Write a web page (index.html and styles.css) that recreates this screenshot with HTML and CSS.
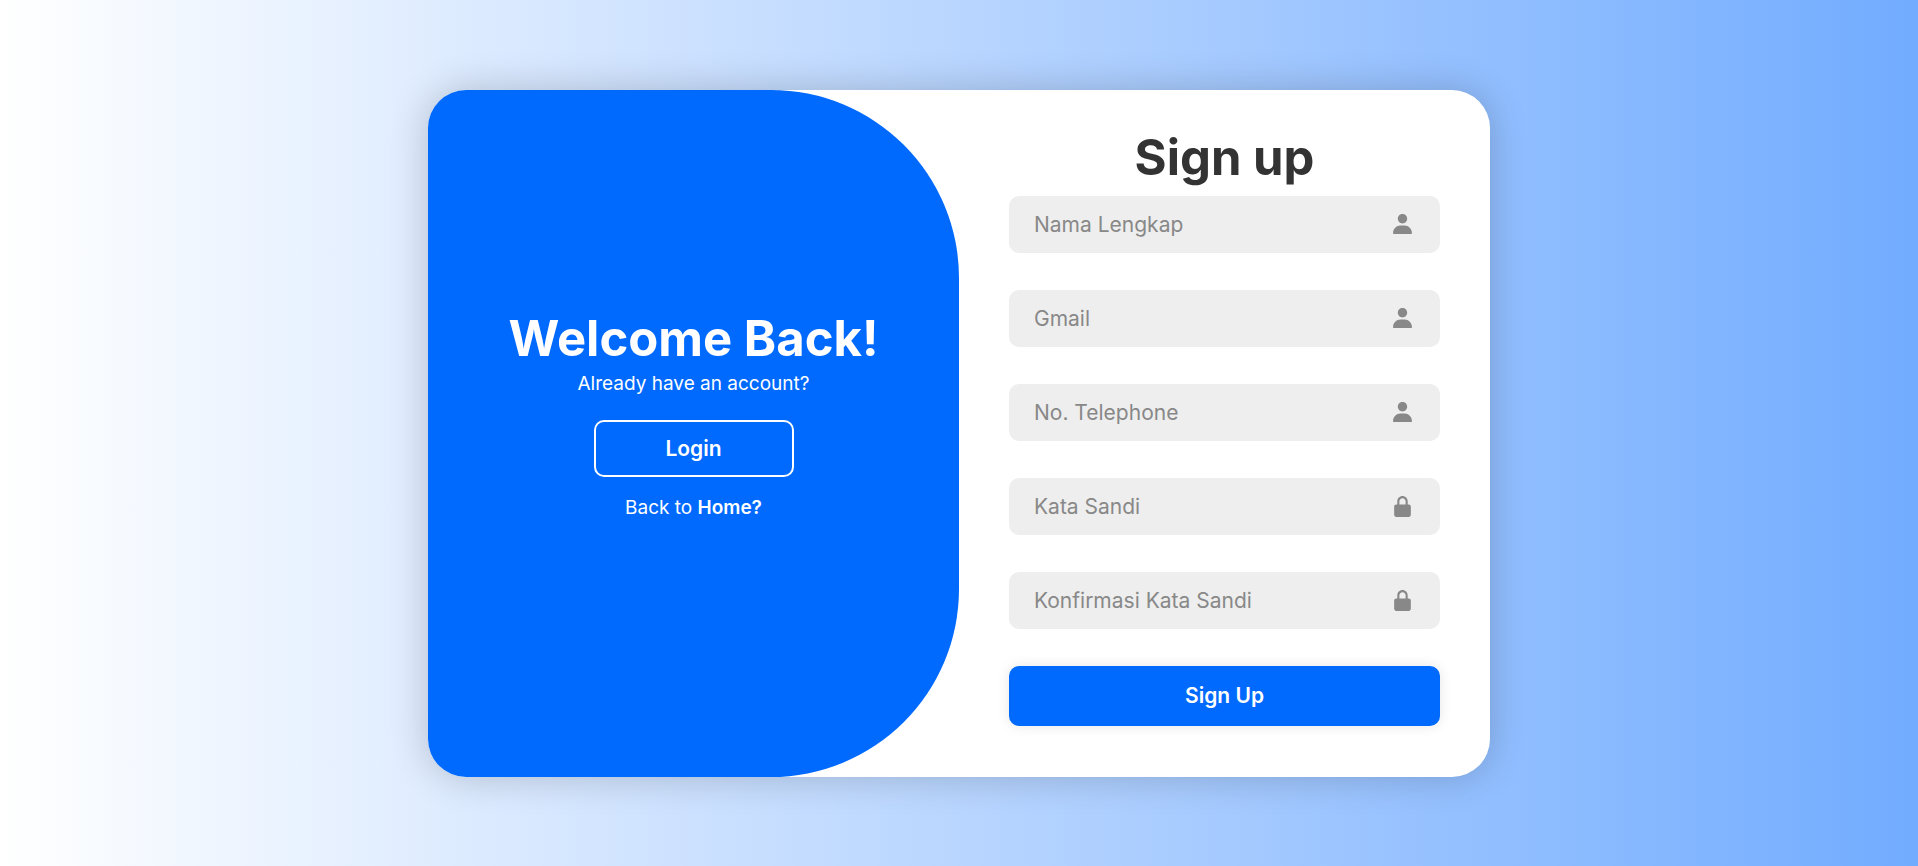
FILE: index.html
```html
<!DOCTYPE html>
<html lang="id">
<head>
<meta charset="utf-8">
<meta name="viewport" content="width=device-width, initial-scale=1">
<title>Sign up</title>
<link rel="stylesheet" href="styles.css">
</head>
<body>
<svg class="sprite" aria-hidden="true">
  <symbol id="icon-user" viewBox="0 0 24 24"><path d="M7.500 6.500C7.500 8.981 9.519 11 12 11s4.500-2.019 4.500-4.500S14.481 2 12 2 7.500 4.019 7.500 6.500zM20 21h1v-1c0-3.859-3.141-7-7-7h-4c-3.860 0-7 3.141-7 7v1h17z"/></symbol>
  <symbol id="icon-lock" viewBox="0 0 24 24"><path d="M20 12c0-1.103-.897-2-2-2h-1V7c0-2.757-2.243-5-5-5S7 4.243 7 7v3H6c-1.103 0-2 .897-2 2v8c0 1.103.897 2 2 2h12c1.103 0 2-.897 2-2v-8zM9 7c0-1.654 1.346-3 3-3s3 1.346 3 3v3H9V7z"/></symbol>
</svg>
<main class="card">
  <section class="welcome">
    <h1 class="title title-light">Welcome Back!</h1>
    <p class="note">Already have an account?</p>
    <button class="login" type="button">Login</button>
    <p class="note">Back to <a class="home" href="#">Home?</a></p>
  </section>
  <form class="signup">
    <h1 class="title title-dark">Sign up</h1>
    <div class="fields">
      <label class="field"><input class="input" type="text" placeholder="Nama Lengkap" aria-label="Nama Lengkap"><svg class="icon" aria-hidden="true"><use href="#icon-user"/></svg></label>
      <label class="field"><input class="input" type="email" placeholder="Gmail" aria-label="Gmail"><svg class="icon" aria-hidden="true"><use href="#icon-user"/></svg></label>
      <label class="field"><input class="input" type="tel" placeholder="No. Telephone" aria-label="No. Telephone"><svg class="icon" aria-hidden="true"><use href="#icon-user"/></svg></label>
      <label class="field"><input class="input" type="password" placeholder="Kata Sandi" aria-label="Kata Sandi"><svg class="icon" aria-hidden="true"><use href="#icon-lock"/></svg></label>
      <label class="field"><input class="input" type="password" placeholder="Konfirmasi Kata Sandi" aria-label="Konfirmasi Kata Sandi"><svg class="icon" aria-hidden="true"><use href="#icon-lock"/></svg></label>
      <button class="submit" type="submit">Sign Up</button>
    </div>
  </form>
</main>
</body>
</html>
```
FILE: styles.css
```css
* {
  box-sizing: border-box;
  margin: 0;
  padding: 0;
}

body {
  display: flex;
  align-items: center;
  justify-content: center;
  min-height: 100vh;
  padding: 24px;
  background: linear-gradient(90deg, #ffffff, #72acff);
  font-family: Inter, "Open Sans", sans-serif;
  color: #333333;
}

.sprite {
  display: none;
}

.card {
  display: grid;
  grid-template-columns: 1fr 1fr;
  width: 100%;
  max-width: 1062px;
  overflow: hidden;
  border-radius: 38px;
  background: #ffffff;
  box-shadow: 0 0 38px rgba(0, 0, 0, 0.2);
}

.welcome {
  display: flex;
  flex-direction: column;
  align-items: center;
  justify-content: center;
  padding: 0 24px 32px;
  border-radius: 0 188px 188px 0;
  background: #006aff;
  color: #ffffff;
  text-align: center;
}

.title {
  font-size: 49px;
  line-height: 55px;
  font-weight: 700;
}

.title-light {
  margin-bottom: 3px;
}

.title-dark {
  margin-bottom: 11px;
  text-align: center;
}

.note {
  font-size: 19px;
  line-height: 30px;
}

.login {
  width: 200px;
  height: 57px;
  margin: 21px 0 16px;
  border: 2px solid #ffffff;
  border-radius: 10px;
  background: transparent;
  color: inherit;
  font: 600 21px Inter, "Open Sans", sans-serif;
}

.home {
  color: inherit;
  font-weight: 600;
  text-decoration: none;
}

.signup {
  padding: 40px 50px 51px;
}

.fields {
  display: flex;
  flex-direction: column;
  gap: 37px;
}

.field {
  display: flex;
  align-items: center;
  height: 57px;
  padding: 0 25px;
  border-radius: 10px;
  background: #eeeeee;
}

.input {
  flex: 1;
  min-width: 0;
  border: 0;
  outline: 0;
  background: transparent;
  color: #333333;
  font: 400 21px Inter, "Open Sans", sans-serif;
}

.input::placeholder {
  color: #888888;
  opacity: 1;
}

.icon {
  flex: none;
  width: 25px;
  height: 25px;
  fill: #888888;
}

.submit {
  height: 60px;
  border: 0;
  border-radius: 10px;
  background: #006aff;
  box-shadow: 0 0 13px rgba(0, 0, 0, 0.1);
  color: #ffffff;
  font: 600 21px Inter, "Open Sans", sans-serif;
}
```
